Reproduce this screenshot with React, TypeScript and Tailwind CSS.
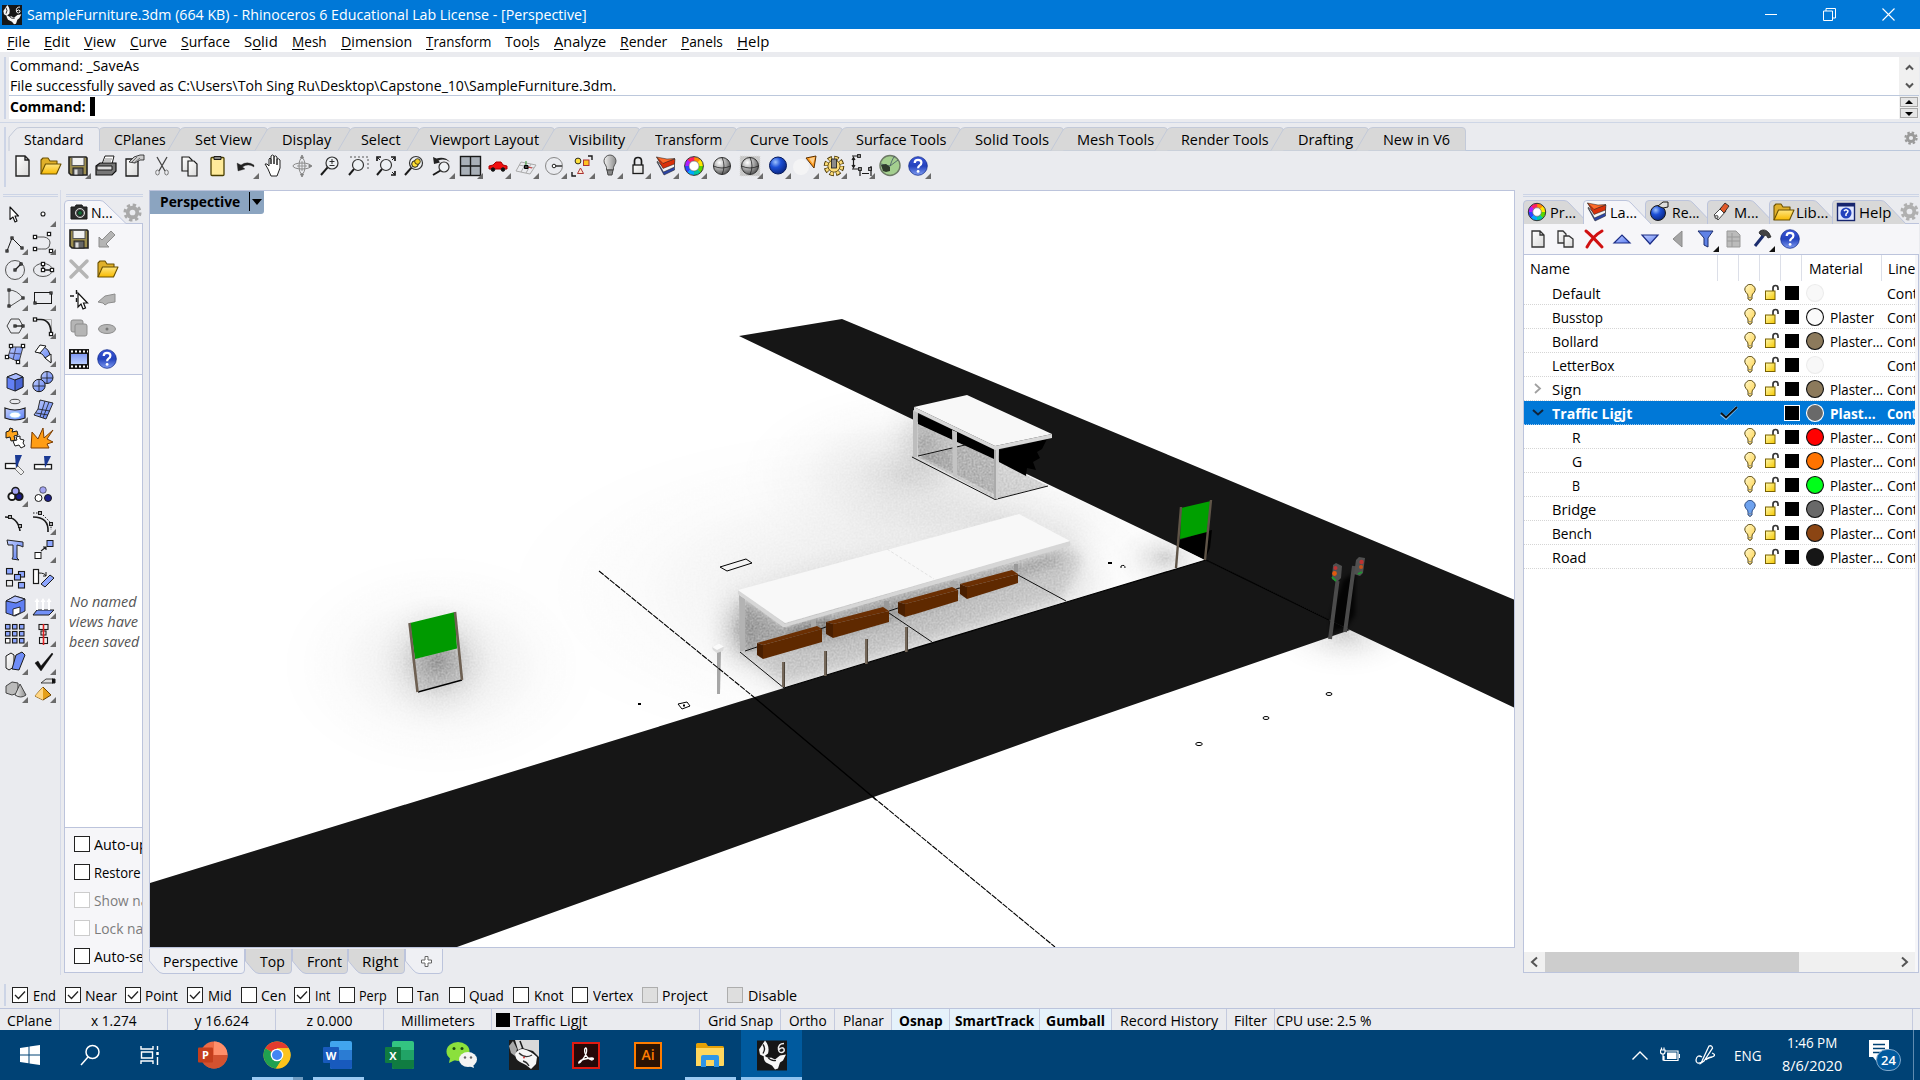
import React, { useLayoutEffect, useRef } from "react";

type Kids = { children?: React.ReactNode };

/* Text set to an exact advance width */
function T({ w, className = "", children }: Kids & { w: number; className?: string }) {
  const ref = useRef<HTMLSpanElement>(null);
  useLayoutEffect(() => {
    const el = ref.current;
    if (el) el.style.transform = `scaleX(${w / el.offsetWidth})`;
  });
  return (
    <span className={"flex shrink-0 " + className} style={{ width: w }}>
      <span ref={ref} className="inline-block shrink-0 origin-left whitespace-pre">{children}</span>
    </span>
  );
}

function Ic({ tri, triColor = "#6b6b6b", children }: Kids & { tri?: boolean; triColor?: string }) {
  return (
    <svg width="28" height="28" viewBox="0 0 28 28" className="block shrink-0" fill="none" stroke="#1a1a1a" strokeWidth="1">
      {children}
      {tri && <path d="M27 21V27H21Z" fill={triColor} stroke="none" />}
    </svg>
  );
}

function Defs() {
  return (
    <svg className="absolute h-0 w-0">
      <defs>
        <linearGradient id="paper" x1="0" y1="0" x2="1" y2="1"><stop offset="0" stopColor="#fff" /><stop offset="1" stopColor="#d9d9d9" /></linearGradient>
        <linearGradient id="gold" x1="0" y1="0" x2="0" y2="1"><stop offset="0" stopColor="#ffe680" /><stop offset="1" stopColor="#f7b900" /></linearGradient>
        <linearGradient id="blu" x1="0" y1="0" x2="1" y2="1"><stop offset="0" stopColor="#c3d0ff" /><stop offset="1" stopColor="#5b7df2" /></linearGradient>
        <linearGradient id="blv" x1="0" y1="0" x2="0" y2="1"><stop offset="0" stopColor="#7f98f5" /><stop offset="1" stopColor="#bcd0ff" /></linearGradient>
        <radialGradient id="ballg" cx=".35" cy=".3" r=".8"><stop offset="0" stopColor="#fff" /><stop offset=".5" stopColor="#a5a5a5" /><stop offset="1" stopColor="#444" /></radialGradient>
        <radialGradient id="ballb" cx=".35" cy=".3" r=".8"><stop offset="0" stopColor="#9cc2ff" /><stop offset=".4" stopColor="#1c4fd6" /><stop offset="1" stopColor="#061f74" /></radialGradient>
        <linearGradient id="help" x1="0" y1="0" x2="0" y2="1"><stop offset="0" stopColor="#3a55d8" /><stop offset=".5" stopColor="#2443bd" /><stop offset="1" stopColor="#7f9cf2" /></linearGradient>
        <linearGradient id="bulb" x1="0" y1="0" x2="1" y2="1"><stop offset="0" stopColor="#fff7c8" /><stop offset="1" stopColor="#ffd24a" /></linearGradient>
        <linearGradient id="lock" x1="0" y1="0" x2="1" y2="1"><stop offset="0" stopColor="#fff9b0" /><stop offset="1" stopColor="#f5c800" /></linearGradient>
        <linearGradient id="steel" x1="0" y1="0" x2="1" y2="0"><stop offset="0" stopColor="#f2f2f2" /><stop offset="1" stopColor="#8a8a8a" /></linearGradient>
      </defs>
    </svg>
  );
}

const Page = () => <path d="M8 4H17L21 8V24H8ZM17 4V8H21" fill="url(#paper)" stroke="#222" strokeWidth="1.4" />;
const Folder = () => (
  <g strokeLinejoin="round">
    <path d="M5 22V8L7 6H12L14 9H21V12" fill="#e0b02a" stroke="#6b5000" strokeWidth="1.100" />
    <path d="M5 22L9.500 12H25L20.500 22Z" fill="url(#gold)" stroke="#6b5000" strokeWidth="1.100" />
  </g>
);
const Floppy = () => (
  <g>
    <path d="M5 5H22L23 6V23H7L5 21Z" fill="#9c8d4e" stroke="#222" strokeWidth="1.600" />
    <rect x="8" y="5.500" width="12" height="8" fill="#f1f1f1" stroke="#555" />
    <rect x="9" y="16" width="10" height="7" fill="#666" stroke="#222" />
    <rect x="10.500" y="17.500" width="3" height="5" fill="#ddd" stroke="none" />
  </g>
);
const Help = () => (
  <g>
    <circle cx="14" cy="14" r="9.300" fill="url(#help)" stroke="#16308f" strokeWidth=".8" />
    <path d="M10.700 11Q10.700 7.800 14 7.800Q17.400 7.800 17.400 10.700Q17.400 12.500 15.500 13.600Q14.100 14.600 14.100 16.300" stroke="#fff" strokeWidth="2.200" />
    <circle cx="14.100" cy="19.400" r="1.400" fill="#fff" stroke="none" />
  </g>
);
const Lens = ({ x = 16, y = 11, r = 6, fill = "#eef1f4" }) => (
  <g>
    <path d={`M${x - r * 0.7} ${y + r * 0.7}L5 23`} strokeWidth="2" />
    <circle cx={x} cy={y} r={r} fill={fill} stroke="#333" strokeWidth="1.200" />
  </g>
);
const Gear = ({ c = "#a9a9a9", s = 18, f = "#eaebef" }) => (
  <svg width={s} height={s} viewBox="0 0 20 20" className="block shrink-0">
    <circle cx="10" cy="10" r="7" fill={c} />
    <circle cx="10" cy="10" r="8" fill="none" stroke={c} strokeWidth="3" strokeDasharray="3.500 2.783" />
    <circle cx="10" cy="10" r="3" fill={f} />
  </svg>
);
const Wheel = ({ x = 14, y = 14, r = 7.2 }) => {
  const cols = ["#ff8a00", "#ffe600", "#59d600", "#00c8a0", "#00a8ff", "#2b46ff", "#b01cff", "#ff2060"];
  return (
    <g>
      {cols.map((c, i) => {
        const a = ((i - 2) * Math.PI) / 4, b = ((i - 0.95) * Math.PI) / 4;
        return <path key={i} stroke={c} strokeWidth="4.200" d={`M${x + r * Math.cos(a)} ${y + r * Math.sin(a)}A${r} ${r} 0 0 1 ${x + r * Math.cos(b)} ${y + r * Math.sin(b)}`} />;
      })}
      <circle cx={x} cy={y} r={r + 2.2} stroke="#222" strokeWidth=".9" />
      <circle cx={x} cy={y} r={r - 2.2} stroke="#555" strokeWidth=".6" fill="#fff" />
    </g>
  );
};
const Layers = () => (
  <g strokeWidth=".5" strokeLinejoin="round">
    <path d="M5 10L12 23L22.500 18V12L11 18Z" fill="#2d45a5" />
    <path d="M5 9L11.500 20L22.500 15V9L11 15Z" fill="#f4f4f4" />
    <path d="M4.500 5L11 16.500L22.500 12L23 7L11 10.500Z" fill="#d9300a" />
    <path d="M4.500 5L15 7L23 6.500L11 11.500Z" fill="#ff6a2a" />
  </g>
);
const Sphere = ({ id = "url(#ballg)" }) => (
  <g><circle cx="14" cy="14" r="8.500" fill={id} stroke="#333" /><path d="M5.500 14Q14 18 22.500 14M14 5.500Q18 14 14 22.500" stroke="#222" strokeWidth=".8" /></g>
);
const N = ({ p, r = 1.6 }: { p: number[][]; r?: number }) => <g fill="#fff" strokeWidth="1.200">{p.map((q, i) => <rect key={i} x={q[0] - r} y={q[1] - r} width={r * 2} height={r * 2} />)}</g>;
const Arrow = () => <path d="M9 7V19.500L12 17L14 22L16 21L14 16H17.500Z" fill="#fff" stroke="#111" strokeWidth="1.100" strokeLinejoin="round" />;

const toolbar: [React.ReactNode, boolean?][] = [
  [<Page />],
  [<Folder />],
  [<Floppy />, true],
  [<g><path d="M10 12L13 4H22L20 12" fill="#fff" /><path d="M4 14L8 11H24V19L20 23H4Z" fill="#777" stroke="#111" strokeWidth="1.200" /><path d="M5 14H20V18H5Z" fill="#ddd" /><path d="M12 9H19M13 7H20" stroke="#888" /></g>],
  [<g><path d="M6 7H18V24H6Z" fill="url(#paper)" strokeWidth="1.300" /><path d="M9 10L14 5L20 3H24V8H20L15 11Z" fill="#ccc" strokeWidth=".8" /><path d="M12 10L17 5M14 11L20 6" stroke="#555" strokeWidth=".8" /></g>],
  [<g><path d="M9 5L17 19M19 5L11 19" stroke="#444" strokeWidth="1.300" /><ellipse cx="9.500" cy="20.500" rx="1.800" ry="2.500" stroke="#777" /><ellipse cx="18.500" cy="20.500" rx="1.800" ry="2.500" stroke="#777" /></g>],
  [<g fill="url(#paper)" strokeWidth="1.200"><path d="M6 5H13L16 8V19H6Z" /><path d="M12 9H18L21 12V24H12Z" /></g>],
  [<g><rect x="7" y="5.500" width="13" height="18" rx="1" fill="#ffeb9a" stroke="#4a3f00" strokeWidth="1.300" /><path d="M10 7.500V4.500H17V7.500Z" fill="#888" /></g>],
  [<path d="M5 11L6 19L13 17L10.500 15Q16 11 22 15V13Q15 8.500 9 13Z" fill="#222" stroke="#333" strokeWidth=".3" />, true],
  [<path d="M8 17L5 12Q7 11 9 14V7Q10 5 11 7V12V4Q12.500 2 14 4V12V4.500Q15.500 3 17 5V13V7Q18.500 6 20 8V16L17 24H11Z" fill="#fff" stroke="#222" strokeWidth="1" />],
  [<g stroke="#888"><ellipse cx="14" cy="14" rx="9" ry="3" /><ellipse cx="14" cy="14" rx="3" ry="8" /><path d="M14 3L15.500 6H12.500ZM14 25L15.500 22H12.500ZM24 14L21 12.500V15.500Z" fill="#777" /><path d="M14 9V19M9 14H19" strokeWidth=".8" /></g>],
  [<g><Lens /><path d="M13.500 9.500H18.500M16 7V12M13.500 13.500H18.500" strokeWidth=".9" /></g>],
  [<g><path d="M6 5H24V19" stroke="#555" strokeDasharray="2 2" /><Lens x={14} y={13} r={5.5} /></g>],
  [<g><Lens x={14} y={13} r={5.5} /><path d="M5 9V5H9M19 5H23V9M23 19V23H19" strokeWidth="1.700" /><path d="M5 5L8 8M23 5L20 8M23 23L20 20" /></g>],
  [<g><Lens x={16} y={11} r={6.5} /><circle cx="15" cy="12" r="3.300" fill="#ffe03a" /><circle cx="17.500" cy="9.500" r="2.800" fill="#f0cc20" strokeWidth=".8" /></g>],
  [<g><Lens x={16} y={15} r={5} /><path d="M5 5L6 12L12 10.500L10.500 8.500Q16 6 22 10Q17 4 8.500 6.500Z" fill="#222" stroke="none" /></g>, true],
  [<g><rect x="4.500" y="4.500" width="20" height="19" fill="#a9b0b8" strokeWidth="1.400" /><path d="M14.500 5V23M5 14H24" strokeWidth="1.400" /></g>, true],
  [<g><path d="M5 14L9 13L12 10H17L19 13L23 14V17H5Z" fill="#f01010" stroke="#a00" /><circle cx="9" cy="17.500" r="1.800" fill="#111" /><circle cx="19" cy="17.500" r="1.800" fill="#111" /></g>, true],
  [<g stroke="#aaa"><path d="M9 10L24 13L18 22L4 19ZM7 13L22 16M14 11L9 20M19 12L14 21" /><path d="M14 15V9" stroke="#393" /><path d="M15 15L20 16" stroke="#c33" /><path d="M12.500 13.500H16V16.500H12.500Z" fill="#444" stroke="#000" /></g>, true],
  [<g stroke="#888"><circle cx="14" cy="14" r="8.500" /><circle cx="14" cy="14" r="1.800" fill="#fff" stroke="#222" /><path d="M16 14H22" stroke="#222" strokeWidth="1.400" /></g>, true],
  [<g><circle cx="10" cy="9" r="2.900" fill="#ffe03a" strokeWidth=".9" /><rect x="15.500" y="8" width="5.500" height="5.500" fill="#ffc21f" stroke="#a33" /><path d="M12.500 16L15.500 21.500H9.500Z" fill="#ffe7d0" stroke="#a33" /><path d="M20 4H24V8M4 20V24H8" strokeWidth="1.400" /></g>, true],
  [<g><path d="M10.500 18Q11 15 9.500 13A6 6 0 1 1 18.500 13Q17 15 17.500 18Z" fill="url(#steel)" stroke="#555" /><path d="M11 18H17L16 23H12Z" fill="#888" stroke="#444" /></g>, true],
  [<g><path d="M10.500 13V9Q10.500 5.500 14 5.500Q17.500 5.500 17.500 9V13" strokeWidth="1.700" /><rect x="9" y="13" width="10" height="8.500" fill="url(#paper)" strokeWidth="1.300" /></g>, true],
  [<Layers />, true],
  [<Wheel />, true],
  [<Sphere />],
  [<g><rect x="4" y="4" width="20" height="20" fill="#c8c8c8" stroke="#ddd" strokeDasharray="1 1" /><Sphere /></g>, true],
  [<circle cx="14" cy="13.500" r="8.500" fill="url(#ballb)" stroke="#061a5c" />, true],
  [<g><circle cx="9" cy="15" r="8" fill="#f8f8f8" stroke="none" opacity=".7" /><path d="M14 6L24 4L22 16Z" fill="#ff9a1f" stroke="#5b3000" /><path d="M17 6.500L21 12L23 5Z" fill="#ffd08a" stroke="none" /></g>, true],
  [<g><circle cx="14" cy="14" r="8" stroke="#4a3600" strokeWidth="4.600" strokeDasharray="4.200 2.083" /><circle cx="14" cy="14" r="7.600" stroke="#fbdc7a" strokeWidth="3.400" strokeDasharray="2.900 3.069" strokeDashoffset="-.5" /><circle cx="14" cy="14" r="6" fill="#fbdc7a" stroke="#4a3600" /><circle cx="14" cy="14" r="5.500" fill="#fbdc7a" stroke="none" /><rect x="11.500" y="7" width="5" height="9" fill="#8a8a8a" strokeWidth=".8" /></g>, true],
  [<g strokeWidth="1.200"><path d="M4 4H12M5.500 6V15M4 17H12V24M23 14V24M14 21.500H21M4 8L5.500 5.500L7 8M4 13L5.500 15.500L7 13" /><N p={[[11, 4], [12, 17], [22, 17]]} r={1.3} /></g>, true],
  [<g><circle cx="14" cy="13.500" r="10" fill="#a4cf8f" stroke="#6d7a66" strokeWidth="1.400" /><path d="M5 12L14 14L22 8M14 14Q17 5 19 4" stroke="#456" strokeWidth=".8" /><path d="M5 13L10 12L14 15V19L10 20L7 19Z" fill="#2f3b2c" stroke="none" /></g>],
  [<Help />, true],
];

const sideTools: [React.ReactNode, boolean?][] = [
  [<Arrow />], [<circle cx="14" cy="14" r="2" fill="#fff" strokeWidth="1.100" />, true],
  [<g><path d="M6 23L11 10L21 20" /><N p={[[6, 23], [11, 10], [21, 20]]} r={1} /></g>, true], [<g><path d="M6 9H15Q21 10 21 15Q21 20 17 21Q13 21 6 21" stroke="#555" /><N p={[[6, 9], [20, 6], [6, 21], [22, 23]]} /></g>, true],
  [<g><circle cx="14" cy="14" r="9.500" stroke="#555" /><path d="M14 14L20 8" strokeWidth="1.300" /><N p={[[14, 14], [20, 8]]} r={1} /></g>, true], [<g><ellipse cx="14" cy="14" rx="9.500" ry="6.500" stroke="#555" /><path d="M14 8V14H23" strokeWidth="1.300" /><N p={[[14, 8], [14, 14], [23, 14]]} /></g>, true],
  [<g><path d="M8 6V23L22 14Q16 6 8 6" stroke="#555" /><N p={[[8, 6], [8, 22], [22, 14]]} r={1} /></g>, true], [<g><rect x="5.500" y="8.500" width="17" height="11" /><N p={[[6, 19], [22, 9]]} r={1} /></g>, true],
  [<g><path d="M10 7H18L22 14L18 21H10L6 14Z" stroke="#444" /><path d="M14 14H22" strokeWidth="1.300" /><N p={[[14, 14], [22, 14]]} r={1} /></g>, true], [<g><path d="M6 7.500H22.500V22" stroke="#aaa" /><path d="M6 7.500H12Q22 8 22 22" strokeWidth="1.700" /><N p={[[6, 7.5], [22, 22]]} /></g>, true],
  [<g><path d="M10 7L22 7L18 22L7 17Z" fill="url(#blu)" stroke="#444" /><path d="M15 7L12 20M8 13L20 14" stroke="#446" /><N p={[[10, 6], [22, 6], [6, 17], [17, 22]]} /></g>, true], [<g><path d="M11 6Q22 7 22 22L16 18Q14 13 7 12Z" fill="url(#blu)" /><path d="M11 5L17 6L11 13L6 12ZM16 18L22 14V23Z" fill="#fff" /></g>, true],
  [<g strokeWidth=".9"><path d="M6 9L15 5.500L22 9V19L14 23L6 20Z" fill="#6380f5" /><path d="M6 9L15 5.500L22 9L14 12Z" fill="#a9bbff" /><path d="M14 12V23L22 19V9Z" fill="#4864d4" /></g>, true], [<g><circle cx="18" cy="9.500" r="6" fill="url(#blu)" /><path d="M12 10H24M18 4V15" strokeWidth=".8" /><circle cx="10" cy="17.500" r="6.200" fill="url(#blu)" /><path d="M4 18H16M10 12V24" strokeWidth=".8" /></g>, true],
  [<g><ellipse cx="14" cy="5.500" rx="5" ry="2.200" stroke="#444" /><path d="M4 12Q14 16 24 12V22Q14 26 4 22Z" fill="url(#blu)" strokeWidth="1.200" /><ellipse cx="14" cy="19" rx="5.500" ry="3" fill="#fff" stroke="#9cf" /></g>, true], [<g strokeWidth=".9"><path d="M11 4L24 7L17 23L5 19L9 13Z" fill="url(#blu)" /><path d="M9 13L21 15M16 5L11 21M20 6L14 22M7 17L19 19" strokeWidth=".8" /></g>, true],
  [<g strokeLinejoin="round"><path d="M5 8L8 7L9 4L12 5L11 8L16 7L17 11L13 12L14 16L10 17L9 13L5 14Z" fill="#ffa51c" /><path d="M12 17L16 16L15 13L19 12L19 15L23 16L22 19L24 22L20 24L18 21L14 22Z" fill="#fff" /></g>], [<path d="M2 24L3 8L9 15L14 4L15 14L24 6L18 15L24 18L18 20L20 24Z" fill="#ff9d14" stroke="#7a3b00" />],
  [<g><rect x="4.500" y="11.500" width="12" height="5" fill="#fff" strokeWidth="1.300" /><path d="M14 3H21L15 17Z" fill="#1b3a94" stroke="none" /><path d="M17 14L23 20L20 23L14 17Z" fill="#eee" stroke="#777" /></g>], [<g><rect x="5.500" y="12.500" width="17" height="4.500" fill="#fff" strokeWidth="1.300" /><path d="M15 4H22L16 16Z" fill="#1b3a94" stroke="none" /></g>],
  [<g strokeWidth="2"><circle cx="11" cy="16.500" r="3.600" fill="#fff" /><circle cx="18" cy="16.500" r="3.600" fill="#1d1f8c" /><circle cx="14.500" cy="11" r="3.600" fill="#a3a4f2" strokeWidth="1.500" /></g>, true], [<g><circle cx="14" cy="10" r="3.300" fill="#a3a4f2" strokeWidth=".6" /><circle cx="9.500" cy="18" r="3.500" fill="#fff" /><circle cx="19" cy="18" r="3.500" fill="#1d1f8c" /></g>],
  [<g><path d="M4 9Q17 9 19 23" strokeWidth="1.600" /><N p={[[9, 9], [19, 18]]} r={1.4} /></g>], [<g><path d="M4 9Q20 9 19 24" strokeWidth="1.700" /><path d="M4 5H10M14 7L22 15V22" strokeDasharray="1.500 1.500" /><N p={[[11, 5], [22, 16]]} r={1.4} /></g>, true],
  [<path d="M6 4L22 6V11L20 10L16 9V22L18 24L11 23L12 21V9L7 9Z" fill="url(#blu)" stroke="#222" strokeWidth="1" />], [<g><rect x="18" y="4.500" width="6" height="6" fill="#8da6ff" /><rect x="6" y="16.500" width="6" height="6" fill="#fff" /><path d="M12 15L17 11M17 14V11H14" strokeWidth="1.100" /></g>, true],
  [<g strokeWidth="1.100"><rect x="5.500" y="4.500" width="6" height="5.500" fill="#8da6ff" /><rect x="17.500" y="7.500" width="6" height="5.500" fill="#8da6ff" /><rect x="13.500" y="10.500" width="6" height="5.500" fill="#8da6ff" /><rect x="5.500" y="16.500" width="6" height="5.500" fill="#eee" /><rect x="17.500" y="18.500" width="6" height="5.500" fill="#8da6ff" /></g>], [<g><rect x="4.500" y="5.500" width="5" height="14" fill="#fff" strokeWidth="1.200" /><path d="M10 9Q16 9 17 12M14 12H17V8" /><path d="M12 20L21 11L25 14L16 23Z" fill="#8da6ff" /></g>],
  [<g strokeWidth=".9"><path d="M5 9L14 4L24 7V19L14 24L5 21Z" fill="#5f7ef2" /><path d="M5 9L14 4L24 7L15 11Z" fill="#b2c1ff" /><path d="M12 24V17L19 15V21Z" fill="#fff" /></g>, true], [<g><path d="M8 18H25L20 23H4Z" fill="#7391f7" /><path d="M8 18V9M14 18V9M20 18V9" stroke="#fff" strokeWidth="2" /><path d="M8 6L10.500 10H5.500ZM14 6L16.500 10H11.500ZM20 6L22.500 10H17.500Z" fill="#fff" stroke="none" /></g>, true],
  [<g strokeWidth="1.100">{[0, 1, 2].map(r => [0, 1, 2].map(c => <rect key={r * 3 + c} x={4.5 + c * 7} y={4.5 + r * 7} width="4.500" height="4.500" fill={r === 2 && c === 0 ? "#fff" : "#8da6ff"} />))}</g>, true], [<g strokeWidth="1.100"><rect x="10" y="4.500" width="9" height="5" fill="#eee" /><rect x="12" y="11" width="5" height="4" fill="#eee" /><rect x="10.500" y="17.500" width="8" height="6" fill="#eee" /><path d="M14.500 4V25" stroke="#e02020" strokeWidth="1.600" /></g>, true],
  [<g strokeWidth="1"><path d="M5 8L10 5L13 7V19L8 22L5 20Z" fill="url(#paper)" /><path d="M15 7L21 4L24 7L18 22L11 21Z" fill="#6f8df7" /></g>, true], [<path d="M6 15L9 13L12 18L23 5L24 6L12 23Z" fill="#111" stroke="#000" strokeWidth=".4" />, true],
  [<g stroke="#444"><path d="M5 10L11 6L17 7V17L11 19L5 17Z" fill="#bbb" /><path d="M19 8L25 19Q20 23 14 19Z" fill="url(#steel)" /></g>, true], [<g><path d="M14 11L22 19L14 24L6 20Z" fill="#e5a01a" stroke="#6b4200" /><path d="M14 11V24L6 20Z" fill="#ffd684" stroke="none" /><path d="M12 7L17 3H24V7H17Z" fill="#ddd" strokeWidth=".8" /><path d="M23 3H26V7H23" fill="#111" /></g>, true],
];

const gry = { fill: "#b5b5b5", stroke: "#8d8d8d" };
const namedViews: React.ReactNode[] = [
  <Floppy />,
  <path d="M6 22V12L9 15L18 6L22 10L13 19L16 22Z" {...gry} />,
  <path d="M6 6L22 22M22 6L6 22" stroke="#b5b5b5" strokeWidth="3.500" strokeLinecap="round" />,
  <Folder />,
  <g><path d="M13 8V22L16 19L18 24L20.500 23L18.500 18H22.500Z" fill="#fff" stroke="#111" strokeWidth="1.200" /><path d="M5 11H9M11.500 5V9M11.500 13V17" strokeWidth="1.400" /></g>,
  <path d="M5 17L12 11L22 9V17L15 18L12 20L10 18Z" {...gry} />,
  <g {...gry}><rect x="6" y="5" width="12" height="12" rx="2" /><rect x="10" y="9" width="12" height="12" rx="2" /></g>,
  <g><ellipse cx="14" cy="14" rx="8.500" ry="4.500" {...gry} /><circle cx="14" cy="14" r="1.500" fill="#777" stroke="none" /></g>,
  <g><rect x="4.500" y="4.500" width="19" height="19" fill="#111" /><rect x="5.500" y="8.500" width="17" height="11" fill="url(#blv)" /><path d="M6 6.500H23M6 21.500H23" stroke="#fff" strokeWidth="2" strokeDasharray="2 2" /></g>,
  <Help />,
];

const menus: [string, string, string, number][] = [
  ["", "F", "ile", 23], ["", "E", "dit", 26], ["", "V", "iew", 32], ["", "C", "urve", 37], ["", "S", "urface", 49], ["S", "o", "lid", 34], ["", "M", "esh", 35],
  ["", "D", "imension", 71], ["", "T", "ransform", 65], ["Too", "l", "s", 35], ["", "A", "nalyze", 52], ["", "R", "ender", 47], ["", "P", "anels", 42], ["", "H", "elp", 32],
];

/* label, tab width, left padding, label width */
const tabs: [string, number, number, number][] = [
  ["Standard", 91, 15, 60], ["CPlanes", 81, 14, 52], ["Set View", 87, 14, 57], ["Display", 83, 14, 49], ["Select", 69, 10, 40], ["Viewport Layout", 135, 10, 109], ["Visibility", 85, 14, 56],
  ["Transform", 97, 15, 67], ["Curve Tools", 106, 13, 78], ["Surface Tools", 118, 13, 90], ["Solid Tools", 103, 14, 74], ["Mesh Tools", 104, 13, 77], ["Render Tools", 116, 13, 88], ["Drafting", 85, 14, 55], ["New in V6", 97, 14, 67],
];

function Check({ on, dis, gray }: { on?: boolean; dis?: boolean; gray?: boolean }) {
  return (
    <span className={"flex h-4 w-4 shrink-0 border " + (gray ? "border-[#adadad] bg-[#dedede]" : dis ? "border-[#cccccc] bg-white" : "border-[#222] bg-white")}>
      {on && <svg viewBox="0 0 14 14" className="h-[14px] w-[14px]"><path d="M2 7L5.500 10.500L12 3.500" fill="none" stroke="#222" strokeWidth="1.300" /></svg>}
    </span>
  );
}

function Scene() {
  const bench = (a: string, b: string, c: string) => <g><polygon points={a} fill="#6b2f03" /><polygon points={b} fill="#5f2900" /><polygon points={c} fill="#4a1f00" /></g>;
  return (
    <svg width="1364" height="756" viewBox="150 191 1364 756" className="block">
      <defs>
        <radialGradient id="sh"><stop offset="0" stopColor="#000" stopOpacity=".4" /><stop offset=".3" stopColor="#000" stopOpacity=".19" /><stop offset=".6" stopColor="#000" stopOpacity=".06" /><stop offset=".85" stopColor="#000" stopOpacity=".012" /><stop offset="1" stopColor="#000" stopOpacity="0" /></radialGradient>
        <filter id="grain" filterUnits="userSpaceOnUse" x="150" y="191" width="1364" height="756">
          <feTurbulence type="fractalNoise" baseFrequency=".5" numOctaves="2" seed="4" result="n" />
          <feColorMatrix in="n" type="matrix" values="0 0 0 0 0  0 0 0 0 0  0 0 0 0 0  1 0 0 0 0" result="m" />
          <feComposite in="SourceGraphic" in2="m" operator="arithmetic" k1=".6" k2=".55" k3="0" k4="0" />
        </filter>
        <filter id="b6" x="-50%" y="-50%" width="200%" height="200%"><feGaussianBlur stdDeviation="6" /></filter>
        <filter id="b14" x="-50%" y="-50%" width="200%" height="200%"><feGaussianBlur stdDeviation="16" /></filter>
        <filter id="b2" x="-50%" y="-50%" width="200%" height="200%"><feGaussianBlur stdDeviation="2" /></filter>
      </defs>
      <rect x="150" y="191" width="1364" height="756" fill="#fff" />
      <g filter="url(#grain)">
        <ellipse cx="440" cy="665" rx="165" ry="115" fill="url(#sh)" opacity=".35" />
        <ellipse cx="437" cy="660" rx="62" ry="66" fill="url(#sh)" opacity=".8" />
        <ellipse cx="905" cy="475" rx="170" ry="95" fill="url(#sh)" opacity=".4" />
        <ellipse cx="925" cy="442" rx="50" ry="60" fill="url(#sh)" opacity=".5" />
        <ellipse cx="870" cy="590" rx="380" ry="170" fill="url(#sh)" opacity=".34" />
        <ellipse cx="1000" cy="520" rx="170" ry="60" fill="url(#sh)" opacity=".25" />
        <polygon points="730,600 800,585 1070,530 1095,590 790,690 730,655" fill="#000" opacity=".13" filter="url(#b14)" />
        <polygon points="738,598 783,628 1070,546 1082,560 1060,602 784,686 738,650" fill="#000" opacity=".12" filter="url(#b6)" />
        <ellipse cx="740" cy="630" rx="35" ry="50" fill="url(#sh)" opacity=".5" />
        <ellipse cx="1165" cy="558" rx="55" ry="38" fill="url(#sh)" opacity=".5" />
        <ellipse cx="1345" cy="635" rx="75" ry="42" fill="url(#sh)" opacity=".5" />
        <polygon points="744,598 783,627 830,616 830,632 745,652" fill="#000" opacity=".18" filter="url(#b2)" />
        <polygon points="790,628 1060,552 1060,562 830,640 790,645" fill="#000" opacity=".2" filter="url(#b6)" />
      </g>

      <polygon points="739,336 842,319 1183,461 1515,600 1515,708 1350,630 1206,560" fill="#161616" />
      <polygon points="1206,560 1350,630 1060,730 457,947 150,947 150,883 784,688 1060,604" fill="#161616" />
      <path d="M1206 560L1329 620M784 688L1060 604L1206 560" stroke="#000" strokeWidth="1.300" fill="none" />

      <g filter="url(#grain)">
        <polygon points="918,457 967,445 1048,486 995,499" fill="#888" opacity=".3" />
        <polygon points="918,424 994,459 994,494 918,455" fill="#777" opacity=".3" />
      </g>
      <polygon points="918,414 994,448 994,459 918,424" fill="#000" />
      <polygon points="999,450 1047,439 1042,449 1037,452 1040,458 1033,462 1036,470 1027,468 1026,476 999,462" fill="#000" />
      <path d="M965 445L918 456M912 457L995 499.500L1048 486" stroke="#111" fill="none" strokeWidth="1" />
      <polygon points="913,410 918,412 917,457 913,457" fill="#bdbdbd" />
      <polygon points="952,430 957,432 957,478 953,476" fill="#c4c4c4" />
      <polygon points="994,448 999,448 998,499 994,498" fill="#d0d0d0" />
      <polygon points="994,448 996,448 996,499 994,498" fill="#aaa" />
      <polygon points="914,407 995,446 1052,434 1052,438 995,450 914,411" fill="#d8d8d8" />
      <polygon points="914,407 967,395 1052,434 995,446" fill="#f8f8f8" />

      <path d="M745 651L760 646M740 652L784 688M820 629L826 627M889 611L898 608M889 613L932 642M1018 575L1066 601M952 590L960 588" stroke="#111" fill="none" strokeWidth="1" />
      <polygon points="739,595 745,599 745,650 740,652" fill="#b3b3b3" />
      <rect x="811" y="620" width="5" height="8" fill="#aaa" /><rect x="884" y="601" width="5" height="10" fill="#999" /><rect x="951" y="581" width="5" height="8" fill="#aaa" /><rect x="1014" y="564" width="4" height="8" fill="#999" />
      <polygon points="738,590 785,624 1070,541 1070,546 785,627 783,627 738,594" fill="#d6d6d6" />
      <polygon points="738,590 1019,514 1070,541 785,623" fill="#f8f8f8" />
      <path d="M887 549L934 579" stroke="#e2e2e2" strokeDasharray="3 2" />
      {bench("757,643 817,626 822,629 763,645", "763,645 822,629 822,642 763,659", "757,643 763,645 763,659 757,655")}
      {bench("826,622 883,607 889,611 833,624", "833,624 889,611 889,622 833,638", "826,622 833,624 833,638 826,634")}
      {bench("898,602 952,587 958,590 905,604", "905,604 958,590 958,601 905,617", "898,602 905,604 905,617 898,613")}
      {bench("960,584 1012,570 1018,574 967,587", "967,587 1018,574 1018,583 967,599", "960,584 967,587 967,599 960,594")}
      {[[783.5, 662], [825.5, 651], [866.5, 639], [906.5, 627]].map((p, i) => <g key={i}><rect x={p[0] - 1.5} y={p[1]} width="3" height="25" fill="#75685a" /><rect x={p[0] + 0.5} y={p[1]} width="1" height="25" fill="#4d4439" /></g>)}
      <polygon points="717,650 721,650 720,694 717,694" fill="#a6a6a6" />
      <polygon points="712,647 719,643.500 724,646.500 723,651 717,653 713,650" fill="#dcdcdc" /><polygon points="712,647 719,643.500 724,646.500 717,650" fill="#fafafa" />
      <path d="M720 567L746 559L752 563L727 571Z" stroke="#000" fill="none" />
      <path d="M599 571L755 698" stroke="#000" strokeWidth="1.100" strokeDasharray="6 1" />
      <path d="M755 698L873 797L876 800" stroke="#000" strokeWidth="1.300" />
      <path d="M873 797L1055 947" stroke="#000" strokeWidth="1.100" strokeDasharray="6 1" />

      <g filter="url(#grain)"><polygon points="412,659 457,649 461,680 418,691" fill="#777" opacity=".22" /></g>
      <path d="M418 692L462 680" stroke="#000" strokeWidth="1.400" />
      <polygon points="410,623 455,612 457,648.500 415,659" fill="#009a00" />
      <path d="M409.500 623L417.500 692M455 612L462 680" stroke="#6e6052" strokeWidth="2.600" />

      <polygon points="1180,540 1207,531 1212,530 1210,548 1205,560 1179,547" fill="#000" />
      <polygon points="1181,508 1211,501 1207,532 1180,539" fill="#00a000" />
      <path d="M1181 507L1176 568M1211 500L1205 560" stroke="#5f5447" strokeWidth="2.400" />

      <polygon points="1343,580 1355,572 1355,615 1346,628 1331,632 1331,615" fill="#000" opacity=".8" filter="url(#b2)" />
      <path d="M1337.500 581L1330 639M1354 566L1345 632" stroke="#4b4b4b" strokeWidth="4" />
      <g><polygon points="1333,565 1336,563 1342,566 1341,578 1337,582 1332,579" fill="#505050" /><circle cx="1335.500" cy="568" r="2" fill="#b33" /><circle cx="1334.500" cy="573.500" r="2.400" fill="#e05a10" /><path d="M1332 577L1336 581" stroke="#1c9a30" strokeWidth="1.800" /></g>
      <g><polygon points="1356,560 1359,557 1365,558 1363,573 1360,576 1354,574" fill="#505050" /><circle cx="1361.500" cy="562" r="2.200" fill="#b33" /><circle cx="1361" cy="567" r="2" fill="#c4501a" /><path d="M1358 574L1362 572" stroke="#1c9a30" strokeWidth="1.800" /></g>

      <g fill="none" stroke="#000"><ellipse cx="1199" cy="744" rx="3.300" ry="1.600" /><ellipse cx="1266" cy="718" rx="3" ry="1.500" /><ellipse cx="1329" cy="694" rx="3" ry="1.500" /><path d="M1121 568V566Q1125 564 1125 568M678 704L687 702L690 706L682 709Z" /><path d="M1108 563H1112M638 704H641M683 705.500H685" strokeWidth="2" /></g>
    </svg>
  );
}

/* name, indent child, kind, material label, material colour */
const layers: { n: string; child?: boolean; exp?: string; sel?: boolean; mat: string; col: string; off?: boolean }[] = [
  { n: "Default", mat: "", col: "" }, { n: "Busstop", mat: "Plaster", col: "#fafafa" }, { n: "Bollard", mat: "Plaster...", col: "#8c7a5c" }, { n: "LetterBox", mat: "", col: "" },
  { n: "Sign", exp: "c", mat: "Plaster...", col: "#8c7a5c" }, { n: "Traffic Ligjt", exp: "o", sel: true, mat: "Plast...", col: "#696969" },
  { n: "R", child: true, mat: "Plaster...", col: "#ff0000" }, { n: "G", child: true, mat: "Plaster...", col: "#ff7300" }, { n: "B", child: true, mat: "Plaster...", col: "#00ff19" },
  { n: "Bridge", mat: "Plaster...", col: "#696969", off: true }, { n: "Bench", mat: "Plaster...", col: "#8b4513" }, { n: "Road", mat: "Plaster...", col: "#161616" },
];
const nameW: Record<string, number> = { Default: 49, Busstop: 51, Bollard: 47, LetterBox: 63, Sign: 29, "Traffic Ligjt": 80, R: 9, G: 10, B: 8, Bridge: 44, Bench: 40, Road: 34 };

function LayerRow({ l }: { l: (typeof layers)[number] }) {
  return (
    <div className={"flex h-6 shrink-0 items-center overflow-hidden border-b border-dotted " + (l.sel ? "border-[#9cc8f0] bg-[#0078d7] font-bold text-white" : "border-[#d5d5d5]")}>
      <div className="flex w-[28px] shrink-0 justify-center pr-[1px]">
        {l.exp === "c" && <svg width="12" height="14" viewBox="0 0 12 14" fill="none" stroke="#a0a0a0" strokeWidth="1.800"><path d="M3 2L8 6.500L3 11" /></svg>}
        {l.exp === "o" && <svg width="12" height="12" viewBox="0 0 12 12" fill="none" stroke="#10243a" strokeWidth="2"><path d="M1 3L6 7.500L11 3" /></svg>}
      </div>
      <div className={"flex w-[166px] shrink-0 items-center pt-[2px] " + (l.child ? "pl-[20px]" : "")}><T w={nameW[l.n]}>{l.n}</T></div>
      <div className="flex w-[21px] shrink-0 justify-center">{l.sel && <svg width="20" height="16" viewBox="0 0 20 16"><path d="M2 9L7 13L18 2" fill="none" stroke="#8ec5f2" strokeWidth="3" /><path d="M2 8L7 12.500L18 2" fill="none" stroke="#111" strokeWidth="2" /></svg>}</div>
      <div className="flex w-[22px] shrink-0 justify-center">{!l.sel && (
        <svg width="12" height="18" viewBox="0 0 12 18"><path d="M4 12Q4 10 2 8.500A5 5 0 1 1 10 8.500Q8 10 8 12V15Q6 18 4 15Z" fill={l.off ? "#6ea2ee" : "url(#bulb)"} stroke={l.off ? "#2b4a80" : "#5b4a12"} /><path d="M4.500 13.500H7.500M4.500 15.500H7.500" stroke="#888" strokeWidth=".8" /></svg>)}
      </div>
      <div className="flex w-[21px] shrink-0 justify-center">{!l.sel && (
        <svg width="16" height="17" viewBox="0 0 16 17"><path d="M9 7V4Q9 1.500 11.500 1.500Q14 1.500 14 4V6" fill="none" stroke="#333" strokeWidth="1.700" /><rect x="1.500" y="7" width="9.500" height="8.500" fill="url(#lock)" stroke="#7a6200" /></svg>)}
      </div>
      <div className="flex w-[20px] shrink-0 justify-center"><span className={"h-[14px] w-[14px] bg-black " + (l.sel ? "outline outline-1 outline-white" : "")} /></div>
      <svg width="20" height="20" viewBox="0 0 20 20" className="ml-[3px] shrink-0">
        <circle cx="10" cy="10" r="8.500" fill={l.col || "#f8f8f8"} stroke={l.sel ? "#fff" : l.col ? "#111" : "#ececec"} strokeWidth="1.100" />
      </svg>
      <div className="ml-[5px] flex w-[57px] shrink-0 pt-[2px]">{l.mat && <T w={l.mat === "Plaster" ? 44 : l.sel ? 46 : 53}>{l.mat}</T>}</div>
      <T w={34} className="pt-[2px]">Conti</T>
    </div>
  );
}

const rightTabs: [React.ReactNode, string, number, number][] = [
  [<Wheel r={6.5} />, "Pr...", 60, 26], [<Layers />, "La...", 62, 27], [<g><circle cx="13" cy="15" r="7.500" fill="url(#ballb)" /><path d="M13 8L18 4H23V9L18 10Z" fill="#ddd" /></g>, "Re...", 62, 28],
  [<g strokeWidth=".8"><path d="M7 17L15 9L19 13L11 22Z" fill="#fff" /><path d="M13 11L18 5L22 8L17 15Z" fill="#e0592a" /><circle cx="9.500" cy="19" r="1.600" fill="#ccc" /></g>, "M...", 62, 25],
  [<Folder />, "Lib...", 63, 32], [<g><rect x="5.500" y="5.500" width="17" height="17" fill="#dfe6ff" strokeWidth="1.400" stroke="#16256e" /><path d="M6 7H22" stroke="#16256e" strokeWidth="3" /><circle cx="14" cy="15" r="5.500" fill="#2443bd" stroke="none" /><path d="M12 13Q14 10.500 16 13Q16 14.500 14 16V18" stroke="#fff" strokeWidth="1.500" /></g>, "Help", 68, 32],
];

const layerTools: [React.ReactNode, boolean?][] = [
  [<path d="M8 6H16L20 10V22H8ZM16 6V10H20" fill="url(#paper)" stroke="#333" strokeWidth="1.300" />],
  [<g fill="url(#paper)" stroke="#333" strokeWidth="1.300"><path d="M6 6H11L14 9V18H6Z" /><path d="M12 11H17L21 14V22H12Z" /></g>],
  [<path d="M6 6Q10 9 22 22M22 6Q13 11 7 22" stroke="#d01010" strokeWidth="3" strokeLinecap="round" />],
  [<path d="M6 18L14 10L22 18Z" fill="url(#blu)" stroke="#1b2d86" strokeWidth="1.200" />],
  [<path d="M6 10L14 19L22 10Z" fill="url(#blu)" stroke="#1b2d86" strokeWidth="1.200" />],
  [<path d="M9 14L18 6V22Z" fill="#a5a5a5" stroke="#8c8c8c" />],
  [<path d="M6 6H21L16 13V22L12 20V13Z" fill="#5f82e6" stroke="#1b2d6e" />, true],
  [<path d="M7 6H16L20 10V22H7ZM7 12H20M7 16H20M12 8V22" fill="#bbb" stroke="#999" />],
  [<g><path d="M12 6Q17 3 21 8L23 12L20 13L18 10L15 12L11 8Z" fill="#444" strokeWidth=".7" /><path d="M15 11L7 21" stroke="#1b2d6e" strokeWidth="3" /></g>, true],
  [<Help />],
];

const osnap: [string, number, number, number, string][] = [
  ["End", 12, 5, 23, "on"], ["Near", 9, 4, 32, "on"], ["Point", 8, 4, 33, "on"], ["Mid", 9, 5, 24, "on"], ["Cen", 9, 4, 25, ""], ["Int", 8, 5, 16, "on"], ["Perp", 8, 4, 28, ""], ["Tan", 10, 4, 22, ""],
  ["Quad", 10, 4, 35, ""], ["Knot", 9, 5, 30, ""], ["Vertex", 8, 5, 40, ""], ["Project", 9, 4, 46, "g"], ["Disable", 19, 5, 49, "g"],
];
const status: [string, number, number, string?][] = [
  ["CPlane", 60, 45], ["x 1.274", 108, 46], ["y 16.624", 108, 54], ["z 0.000", 108, 46], ["Millimeters", 108, 74], ["#Traffic Ligjt", 208, 74],
  ["Grid Snap", 81, 65], ["Ortho", 54, 38], ["Planar", 57, 41], ["Osnap", 58, 44, "b"], ["SmartTrack", 90, 79, "b"], ["Gumball", 72, 59, "b"], ["Record History", 115, 98], ["Filter", 48, 33],
];

const Rhino = ({ six }: { six?: boolean }) => (
  <svg viewBox="0 0 30 30" className="h-full w-full">
    <rect width="30" height="30" fill={six ? "#161616" : "#1c1c1c"} />
    {six ? (
      <g>
        <path d="M2 9L8 0Q13 6 11 13L7 16L3 14Z" fill="#f6f6f6" />
        <path d="M6 4Q9 8 6 13" fill="none" stroke="#161616" strokeWidth="1.300" />
        <path d="M7 15Q11 18 14 17L18 19L23 15L29 14L26 20L23 22L21 28L18 29L15 25L9 22Q6 19 7 15Z" fill="#f6f6f6" />
        <path d="M11 17Q14 21 19 20" fill="none" stroke="#161616" strokeWidth="1.200" />
        <path d="M27 3Q21 3 21.500 9Q22 12.500 25 12Q28 11 27 8.500Q25 6 22 9" fill="none" stroke="#eee" strokeWidth="1.500" />
      </g>
    ) : (
      <g>
        <path d="M6 0H30V17L24 11L13 8L9 10Z" fill="#d9d9d9" />
        <path d="M0 6L4 1L8 9L6 16L2 13Z" fill="#a9a9a9" />
        <path d="M11 1L14 9" fill="none" stroke="#1c1c1c" strokeWidth="1.600" />
        <path d="M6 14Q9 9 14 9Q22 11 28 17L27 24L22 29L17 25L11 22Q6 19 6 14Z" fill="#f6f6f6" />
        <path d="M10 13Q16 19 23 15M14 21Q18 22 20 26" fill="none" stroke="#333" strokeWidth="1.300" />
        <circle cx="15" cy="17.500" r="1" fill="#d33" />
      </g>
    )}
  </svg>
);

function Office({ l, c, d, m }: { l: string; c: string; d: string; m: string }) {
  return (
    <div className="relative h-[28px] w-[30px]">
      <div className="absolute left-[7px] top-0 flex h-[28px] w-[22px] flex-col overflow-hidden rounded-[2px]" style={{ background: c }}>
        <span className="flex-1" /><span className="flex-1" style={{ background: m }} /><span className="flex-1" style={{ background: d }} />
      </div>
      <div className="absolute left-0 top-[6px] flex h-[16px] w-[16px] items-center justify-center rounded-[1px] text-[11px] font-bold leading-none text-white" style={{ background: d }}>{l}</div>
    </div>
  );
}

const apps: { i: React.ReactNode; run?: string; act?: boolean; w: number }[] = [
  { w: 60, i: <svg width="20" height="20" viewBox="0 0 20 20" fill="#fff"><path d="M0 3L8.500 1.800V9.500H0ZM9.500 1.600L20 0V9.500H9.500ZM0 10.500H8.500V18.200L0 17ZM9.500 10.500H20V20L9.500 18.400Z" /></svg> },
  { w: 60, i: <svg width="22" height="22" viewBox="0 0 22 22" fill="none" stroke="#fff" strokeWidth="1.500"><circle cx="13.500" cy="8" r="6.500" /><path d="M9 13L2 21" /></svg> },
  { w: 60, i: <svg width="22" height="22" viewBox="0 0 22 22" fill="none" stroke="#fff" strokeWidth="1.400"><path d="M2 2V5H14V2M2 20V17H14V20M2.500 8H13.500V14H2.500ZM18.500 2V6M18.500 13V21" /><path d="M18.500 8V11" strokeWidth="2.500" /></svg> },
  { w: 66, i: <svg width="30" height="28" viewBox="0 0 30 28"><circle cx="16" cy="14" r="13.500" fill="#ed6c47" /><path d="M16 .5A13.500 13.500 0 0 1 29.500 14H16Z" fill="#ff8f6b" /><path d="M2.500 14H29.500A13.500 13.500 0 0 1 2.500 14Z" fill="#d35230" /><rect x="0" y="6.500" width="15" height="15" rx="1" fill="#c43e1c" /><text x="4" y="18" fontSize="11" fontWeight="700" fill="#fff">P</text></svg> },
  { w: 61, run: "chrome", i: <svg width="28" height="28" viewBox="0 0 28 28"><circle cx="14" cy="14" r="13.500" fill="#fbc116" /><path d="M14 14L2.300 7.300A13.500 13.500 0 0 1 25.700 7.300H14Z" fill="#e33b2e" /><path d="M14 14L2.300 7.300A13.500 13.500 0 0 0 13 27.500L19.500 17Z" fill="#1fa150" /><path d="M25.700 7.300H14L19.800 17.300L13 27.500A13.500 13.500 0 0 0 25.700 7.300Z" fill="#fcc31c" /><circle cx="14" cy="14" r="6.300" fill="#fff" /><circle cx="14" cy="14" r="5" fill="#4285f4" /></svg> },
  { w: 62, run: "word", i: <Office l="W" c="#41a5ee" m="#2b7cd3" d="#185abd" /> },
  { w: 62, i: <Office l="X" c="#33c481" m="#21a366" d="#107c41" /> },
  { w: 62, i: <svg width="32" height="29" viewBox="0 0 32 27"><ellipse cx="12" cy="9.500" rx="11.500" ry="9.500" fill="#8be03c" /><path d="M4 16L3 21L9 18Z" fill="#8be03c" /><circle cx="8" cy="6.500" r="1.500" fill="#1d4a10" /><circle cx="16" cy="6.500" r="1.500" fill="#1d4a10" /><ellipse cx="22" cy="17.500" rx="9" ry="7.500" fill="#f4f4f4" /><path d="M27 22L28 26L23 24Z" fill="#f4f4f4" /><circle cx="19" cy="15.500" r="1.200" fill="#666" /><circle cx="25" cy="15.500" r="1.200" fill="#666" /></svg> },
  { w: 62, i: <div className="h-[30px] w-[30px]"><Rhino /></div> },
  { w: 62, i: <svg width="28" height="27" viewBox="0 0 28 27"><rect x="1" y="1" width="26" height="25" fill="#260808" stroke="#e01b12" strokeWidth="2" /><path d="M13.500 6Q15 6 14.500 10Q14 14 8 20.500Q6 22 7 20Q10 16.500 20 16Q23 16.500 20 18Q15 17 13 11Q12 7 13.500 6Z" fill="none" stroke="#fff" strokeWidth="1.300" /></svg> },
  { w: 62, i: <div className="flex h-[27px] w-[28px] items-center justify-center border-2 border-[#ff7c00] bg-[#2b1303] text-[14px] font-semibold leading-none text-[#ff7c00]">Ai</div> },
  { w: 62, run: "folder", i: <svg width="28" height="26" viewBox="0 0 28 24"><path d="M0 1.500Q0 0 1.500 0H10L12 3H26.500Q28 3 28 4.500V22H0Z" fill="#e5a106" /><path d="M0 5H28V22Q28 23 27 23H0Z" fill="#ffd75e" /><path d="M5 24V14Q5 12 7 12H21Q23 12 23 14V24H18V17H10V24Z" fill="#2f96e8" /></svg> },
  { w: 61, act: true, i: <div className="h-[31px] w-[30px]"><Rhino six /></div> },
];

export default function App() {
  return (
    <div className="flex h-[1080px] w-[1920px] flex-col overflow-hidden bg-[#eaebef] font-['Open_Sans',sans-serif] text-[14px] leading-[18px] text-black">
      <Defs />
      <header className="flex h-[29px] shrink-0 items-center bg-[#0078d7] pl-[2px] text-white">
        <div className="h-5 w-5"><Rhino six /></div>
        <T w={560} className="ml-[5px]">SampleFurniture.3dm (664 KB) - Rhinoceros 6 Educational Lab License - [Perspective]</T>
        <div className="ml-auto flex items-center pr-[25px]">
          <svg width="12" height="12" viewBox="0 0 12 12" className="mr-[46px]"><path d="M0 5.500H12" stroke="#fff" /></svg>
          <svg width="13" height="13" viewBox="0 0 13 13" className="mr-[46px]" fill="none" stroke="#fff"><path d="M.5 3H9.500V12.500H.5ZM3 3V.5H12.500V10H9.500" /></svg>
          <svg width="13" height="13" viewBox="0 0 13 13" fill="none" stroke="#fff" strokeWidth="1.100"><path d="M.5 .5L12.500 12.500M12.500 .5L.5 12.500" /></svg>
        </div>
      </header>
      <nav className="flex h-[23px] shrink-0 items-center gap-[14px] bg-white pl-[7px] pt-[2px]">
        {menus.map((m) => <T key={m[1] + m[2]} w={m[3]}>{m[0]}<span className="underline underline-offset-2">{m[1]}</span>{m[2]}</T>)}
      </nav>

      <section className="mt-[5px] flex h-[62px] shrink-0">
        <div className="ml-[4px] mr-[3px] w-[2px] border-x border-[#ccd4e6]" />
        <div className="flex flex-1 flex-col bg-white">
          <div className="flex h-[39px] flex-col border-b border-[#bcc8dc] pl-[1px]">
            <T w={129}>Command: _SaveAs</T>
            <T w={606} className="mt-[2px]">File successfully saved as C:\Users\Toh Sing Ru\Desktop\Capstone_10\SampleFurniture.3dm.</T>
          </div>
          <div className="flex h-[21px] items-center pl-[1px] font-bold"><T w={76}>Command:</T><span className="ml-[4px] h-[19px] w-[5px] bg-black" /></div>
        </div>
        <div className="mr-[1px] flex w-5 flex-col items-center bg-[#f0f0f0]">
          <div className="flex h-[39px] w-full flex-col items-center justify-between border-b border-[#bcc8dc] pb-[5px] pt-[6px]">
            <svg width="9" height="9" viewBox="0 0 9 9" fill="none" stroke="#555" strokeWidth="2"><path d="M1 6.500L4.500 3L8 6.500" /></svg>
            <svg width="9" height="9" viewBox="0 0 9 9" fill="none" stroke="#555" strokeWidth="2"><path d="M1 2.500L4.500 6L8 2.500" /></svg>
          </div>
          <div className="flex flex-1 flex-col gap-[1px] pt-[1px]">
            {["M5 1L9 5H1Z", "M1 2H9L5 6Z"].map((d) => <div key={d} className="flex h-[10px] w-[18px] items-center justify-center border border-[#a9a9a9] bg-[#e6e6e6]"><svg width="10" height="7" viewBox="0 0 10 7"><path d={d} /></svg></div>)}
          </div>
        </div>
      </section>

      <section className="mt-[3px] flex h-[65px] shrink-0 border-t border-[#ced6e6] pt-[4px]">
        <div className="ml-[4px] mr-[3px] w-[2px] border-x border-[#ccd4e6]" />
        <div className="flex flex-1 flex-col">
          <div className="relative flex h-6 border-b border-[#bcc8dc]">
            {tabs.map(([n, w, p, tw], i) => (
              <div key={n} className={"relative flex h-6 shrink-0 items-center pt-[2px] " + (i === 0 ? "z-10" : "")} style={{ width: w, paddingLeft: p }}>
                <svg className="absolute bottom-0 overflow-visible" style={{ left: i ? -13 : 0 }} width={w + 13} height="24">
                  <path d={i ? `M0 23.500L12 3Q14 .5 17 .5H${w + 9}Q${w + 12.5} .5 ${w + 12.5} 4V23.500` : `M0 24V10L6 3Q8 .5 11 .5H${w - 3}Q${w - 0.5} .5 ${w - 0.5} 4V24`} fill={i ? "#d8d8d8" : "#eaebef"} stroke="#c3cad9" />
                </svg>
                <T w={tw} className="relative z-10">{n}</T>
              </div>
            ))}
            <div className="ml-auto mr-[2px] mt-[4px]"><Gear c="#9a9a9a" s={14} /></div>
          </div>
          <div className="flex pt-[1px]">
            <div className="-ml-[1px] flex">{toolbar.map(([n, t], i) => <Ic key={i} tri={t}>{n}</Ic>)}</div>
          </div>
        </div>
      </section>

      <main className="mt-[3px] flex h-[785px] shrink-0">
        <aside className="flex w-[61px] shrink-0 flex-col border-r border-[#d5dae8]">
          <div className="mb-[3px] ml-[3px] mr-[2px] mt-[4px] h-[3px] border-y border-[#ccd4e6]" />
          <div className="ml-[1px] grid w-[56px] grid-cols-2">{sideTools.map(([n, t], i) => <Ic key={i} tri={t}>{n}</Ic>)}</div>
        </aside>
        <aside className="ml-[3px] flex h-[783px] w-[79px] shrink-0 flex-col">
          <div className="mb-[3px] ml-[2px] mt-[4px] h-[3px] border-y border-[#ccd4e6]" />
          <div className="relative flex h-[24px] shrink-0 items-center pl-[1px]">
            <svg className="absolute left-0 top-0" width="79" height="24"><path d="M.5 24V4Q.5 .5 4 .5H36Q39 .5 41 3L62 23.500H79V24Z" fill="#f6f6f9" stroke="#bcc4dc" /></svg>
            <div className="relative flex items-center">
              <Ic><path d="M6 9H10L11 7H17L18 9H22V21H6Z" fill="#2b2b2b" strokeWidth="1" /><circle cx="15" cy="15" r="4.500" fill="#555" stroke="#ddd" /><circle cx="15" cy="15" r="2.500" fill="#163" /></Ic>
              <T w={22} className="-ml-[2px] pt-[1px]">N...</T>
            </div>
            <div className="relative ml-auto mr-[1px]"><Gear s={19} /></div>
          </div>
          <div className="grid h-[151px] shrink-0 grid-cols-2 content-start border-x border-b border-[#bcc4dc] bg-[#f6f6f9] pr-[21px]">
            {namedViews.map((n, i) => <div key={i} className="flex h-[30px] w-[28px] items-center"><Ic>{n}</Ic></div>)}
          </div>
          <div className="flex h-[452px] shrink-0 flex-col items-center border-x border-[#bcc4dc] bg-white pt-[217px] italic leading-[20px] text-[#555]">
            <T w={67}>No named</T><T w={69}>views have</T><T w={70}>been saved</T>
          </div>
          <div className="flex h-[146px] shrink-0 flex-col gap-[4px] overflow-hidden border border-[#bcc4dc] bg-[#f6f6f9] pl-[9px] pt-[4px]">
            {([["Auto-update", 84], ["Restore named", 93], ["Show named", 83], ["Lock named", 78], ["Auto-set view", 88]] as [string, number][]).map(([s, w], i) => (
              <div key={s} className={"flex h-6 shrink-0 items-center gap-[4px] " + (i === 2 || i === 3 ? "text-[#7c7c7c]" : "")}><Check dis={i === 2 || i === 3} /><T w={w} className="pt-[1px]">{s}</T></div>
            ))}
          </div>
        </aside>

        <section className="ml-[6px] flex w-[1366px] shrink-0 flex-col">
          <div className="relative h-[758px] shrink-0 border border-[#bcc4dc]">
            <Scene />
            <div className="absolute left-0 top-0 flex h-[23px] w-[114px] items-center rounded-br-[3px] bg-[#8ba4c0] pb-[2px] pl-[10px] font-bold">
              <T w={80}>Perspective</T>
              <span className="ml-[9px] h-[19px] w-px bg-black" />
              <svg width="10" height="6" viewBox="0 0 10 6" className="ml-[2px]"><path d="M0 0H10L5 6Z" /></svg>
            </div>
          </div>
          <div className="flex h-[27px] items-start">
            {([["Perspective", 96, 14, 75], ["Top", 47, 15, 25], ["Front", 56, 15, 35], ["Right", 57, 14, 36], ["+", 38, 0, 0]] as [string, number, number, number][]).map(([n, w, p, tw], i) => (
              <div key={n} className="relative flex h-[27px] items-center" style={{ width: w, paddingLeft: p }}>
                <svg className="absolute left-0 top-0" width={w + 1} height="27"><path d={`M.5 1V13L8 22Q11 25.500 14 25.500H${w - 4}Q${w - 0.5} 25.500 ${w - 0.5} 22V1`} fill={i === 0 || i === 4 ? "#eff0f4" : "#d8d8d8"} stroke="#bcc4dc" /></svg>
                {tw ? <T w={tw} className="relative pt-[1px]">{n}</T> : <svg width="13" height="13" viewBox="0 0 13 13" className="relative ml-[15px]"><path d="M5 1.500H8V5H11.500V8H8V11.500H5V8H1.500V5H5Z" fill="#fff" stroke="#666" /></svg>}
              </div>
            ))}
          </div>
        </section>

        <aside className="ml-[8px] flex h-[783px] w-[396px] shrink-0 flex-col overflow-hidden">
          <div className="mb-[3px] mt-[4px] h-[3px] shrink-0 border-y border-[#ccd4e6]" />
          <div className="relative flex h-[24px] shrink-0 items-center border-b border-[#bcc4dc]">
            {rightTabs.map(([ic, n, w, tw], i) => (
              <div key={n} className={"relative flex h-6 shrink-0 items-center pt-[1px] " + (i === 1 ? "z-10" : "")} style={{ width: w }}>
                <svg className="absolute left-0 top-0 overflow-visible" width={w} height="24"><path d={`M.5 24V4Q.5 .5 4 .5H${w - 19}Q${w - 16} .5 ${w - 14} 3L${w + 6} 24`} fill={i === 1 ? "#f6f6f9" : "#d8d8d8"} stroke="#bcc4dc" /></svg>
                <div className="relative flex items-center"><Ic>{ic}</Ic><T w={tw} className="-ml-[1px] pt-[1px]">{n}</T></div>
              </div>
            ))}
            <div className="relative"><Gear c="#b0b0b0" s={19} /></div>
          </div>
          <div className="flex h-[31px] shrink-0 items-center border-b border-l border-[#bcc4dc] bg-[#f6f6f9]">
            {layerTools.map(([n, t], i) => <Ic key={i} tri={t} triColor="#111">{n}</Ic>)}
          </div>
          <div className="flex flex-1 border-b border-l border-[#bcc4dc] bg-white">
            <div className="flex w-[391px] shrink-0 flex-col overflow-hidden">
              <div className="flex h-[26px] shrink-0 items-center">
                <div className="flex h-full w-[194px] items-center border-r border-[#dcdfe8] pl-[6px] pt-[2px]"><T w={40}>Name</T></div>
                <div className="h-full w-[21px] border-r border-[#dcdfe8]" /><div className="h-full w-[21px] border-r border-[#dcdfe8]" /><div className="h-full w-[21px] border-r border-[#dcdfe8]" /><div className="h-full w-[21px] border-r border-[#dcdfe8]" />
                <div className="flex h-full w-[80px] items-center border-r border-[#dcdfe8] pl-[7px] pt-[2px]"><T w={54}>Material</T></div>
                <T w={27} className="ml-[6px] pt-[2px]">Line</T>
              </div>
              {layers.map((l) => <LayerRow key={l.n} l={l} />)}
              <div className="mt-auto flex h-[20px] items-center bg-[#f0f0f0]">
                <svg width="21" height="12" viewBox="0 0 21 12" fill="none" stroke="#555" strokeWidth="2"><path d="M13 1.500L8 6L13 10.500" /></svg>
                <span className="h-full w-[254px] bg-[#cdcdcd]" />
                <svg width="21" height="12" viewBox="0 0 21 12" className="ml-auto" fill="none" stroke="#555" strokeWidth="2"><path d="M8 1.500L13 6L8 10.500" /></svg>
              </div>
            </div>
            <div className="flex-1 border-r border-[#bcc4dc] bg-[#f6f6f9]" />
          </div>
        </aside>
      </main>

      <section className="mt-[7px] flex h-[26px] shrink-0 items-center">
        <div className="ml-[4px] h-[22px] w-[2px] border-x border-[#ccd4e6]" />
        {osnap.map(([n, ml, g, w, k], i) => (
          <div key={n} className="flex items-center" style={{ marginLeft: i ? ml : 6, columnGap: g }}><Check on={k === "on"} gray={k === "g"} /><T w={w} className="pt-[1px]">{n}</T></div>
        ))}
      </section>
      <footer className="flex h-[22px] shrink-0 border-t border-[#bcc4dc]">
        {status.map(([n, w, tw, b]) => {
          const sq = n[0] === "#";
          return (
            <div key={n} className={"flex h-full shrink-0 items-center border-r border-[#c4cade] " + (sq ? "pl-[4px] " : "justify-center ") + (b ? "bg-[#e5f2fb] font-bold" : "")} style={{ width: w }}>
              {sq && <span className="mr-[3px] h-[14px] w-[14px] bg-black" />}
              <T w={tw} className="pt-[2px]">{sq ? n.slice(1) : n}</T>
            </div>
          );
        })}
        <div className="mr-[7px] flex flex-1 items-center border-r border-[#c4cade] pl-[1px]"><T w={95} className="pt-[2px]">CPU use: 2.5 %</T></div>
      </footer>

      <div className="flex h-[50px] shrink-0 bg-[#004275] text-white">
        {apps.map((a, i) => (
          <div key={i} className={"relative flex h-full shrink-0 items-center justify-center " + (a.act ? "bg-[#005a9e]" : "")} style={{ width: a.w }}>
            {a.i}
            {a.act && <span className="absolute bottom-0 left-0 h-[3px] w-full bg-[#8fc3f0]" />}
            {a.run && <span className="absolute bottom-0 left-[6px] flex h-[3px] w-[51px] bg-[#9bcaf2]">{a.run === "chrome" && <i className="ml-auto w-[10px] bg-[#6f9bc0]" />}</span>}
          </div>
        ))}
        <div className="ml-auto flex items-center">
          <svg width="16" height="9" viewBox="0 0 16 9" className="mr-[12px]" fill="none" stroke="#fff" strokeWidth="1.400"><path d="M.5 8.500L8 1L15.500 8.500" /></svg>
          <svg width="20" height="16" viewBox="0 0 20 16" className="mr-[15px]" fill="none" stroke="#fff" strokeWidth="1.200"><path d="M5 4H18V13.500H4V9M19.500 7V11M.5 3H5V5Q5 7 3 7Q.5 7 .5 5ZM1.500 .5V3M4 .5V3M3 7V13.500" /><rect x="7" y="5.500" width="9.500" height="6.500" fill="#fff" stroke="none" /></svg>
          <svg width="20" height="20" viewBox="0 0 20 20" className="mr-[19px]" fill="none" stroke="#fff" strokeWidth="1.300"><path d="M7 16L14 1Q17 0 17.500 3L9 16L6 18ZM7 12Q2 9 1 15Q1 20 7 17M17 8Q22 10 17 12Q12 13 11 15" /></svg>
          <T w={28} className="pt-[1px]">ENG</T>
          <div className="ml-[20px] flex w-[60px] flex-col items-center pt-[1px]"><T w={50} className="h-[23px]">1:46 PM</T><T w={60} className="h-[20px]">8/6/2020</T></div>
          <div className="relative ml-[27px] h-[30px] w-[44px]">
            <svg width="20" height="22" viewBox="0 0 20 22"><path d="M0 0H20V17H8V22L4 17H0Z" fill="#fff" /><path d="M4 4.500H16M4 8.500H16M4 12.500H11" stroke="#004275" strokeWidth="1.400" /></svg>
            <span className="absolute left-[7px] top-[9px] flex h-[22px] w-[25px] items-center justify-center rounded-full border border-[#7fa8cc] bg-[#005a9e] text-[13px] font-semibold leading-none">24</span>
          </div>
          <div className="mr-[6px] h-[50px] w-px bg-[#5f8bb0]" />
        </div>
      </div>
    </div>
  );
}
